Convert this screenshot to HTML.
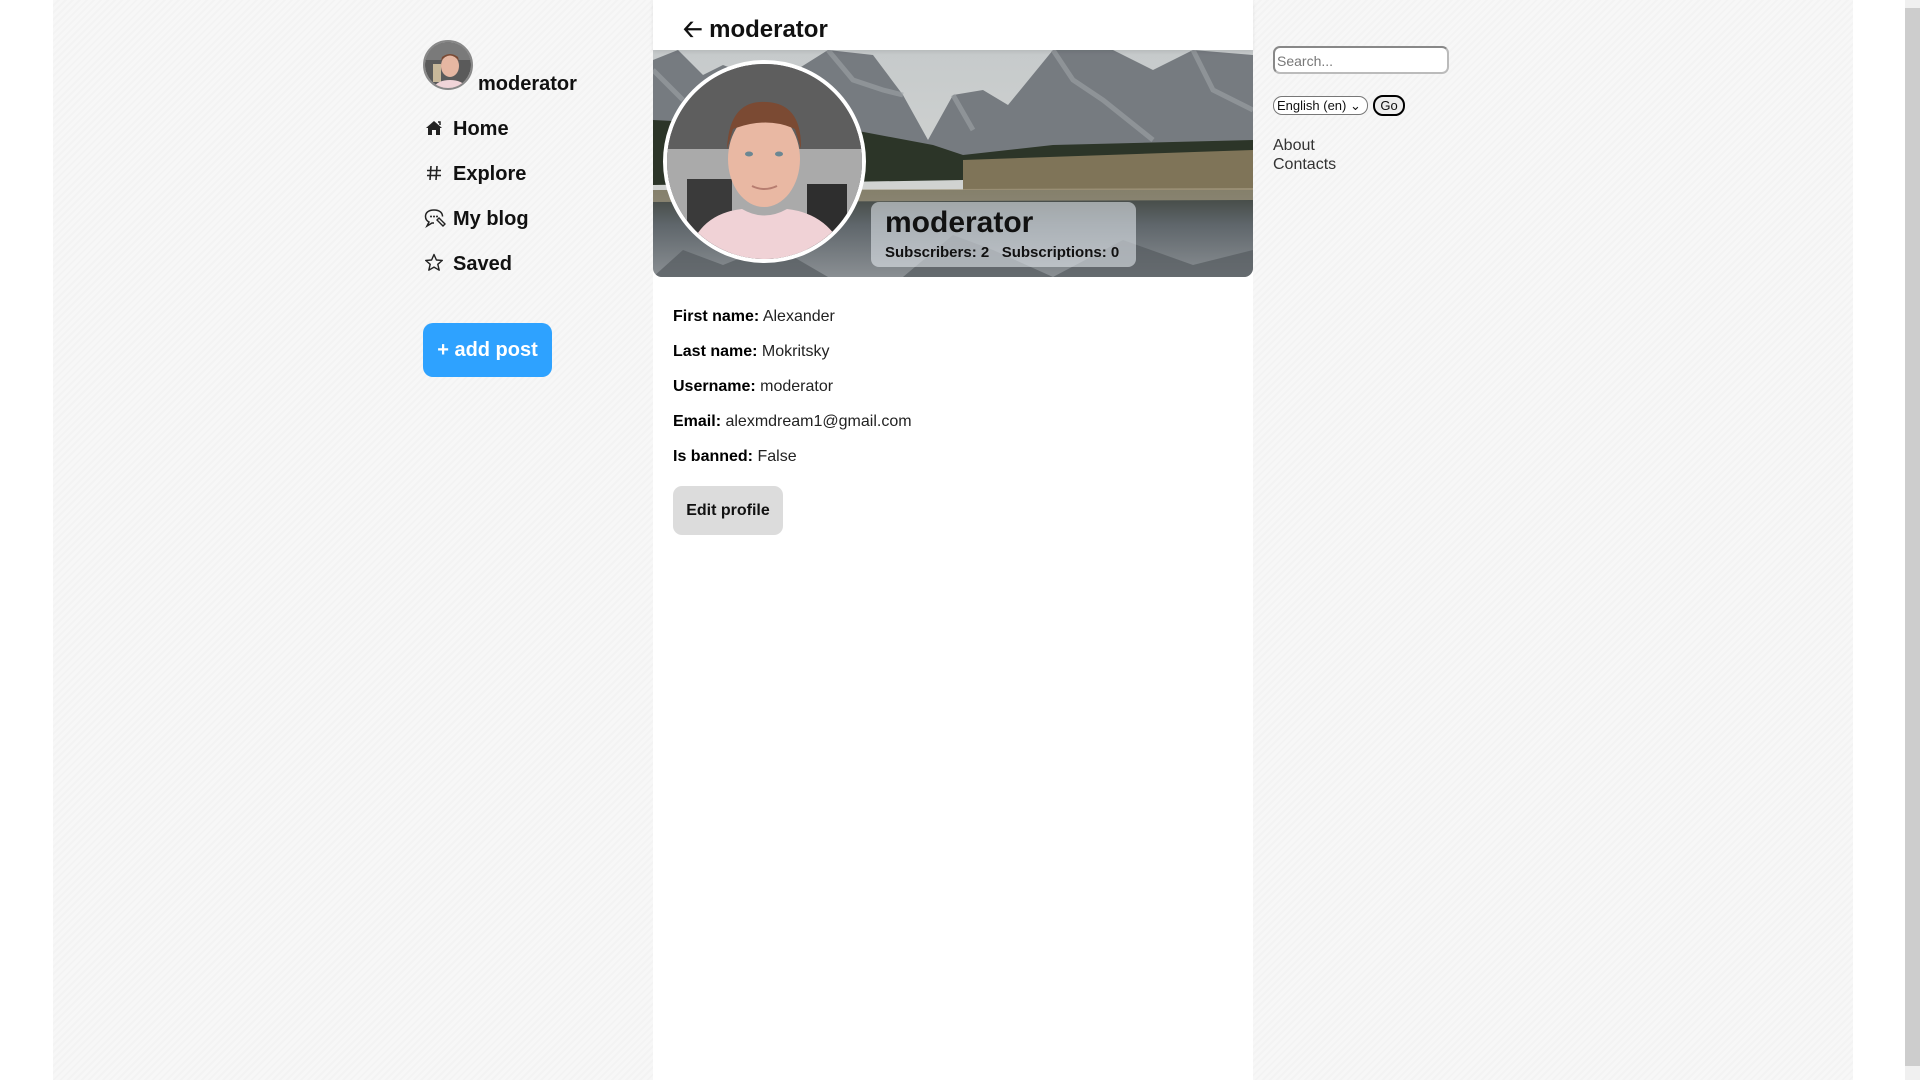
<!DOCTYPE html>
<html><head><meta charset="utf-8">
<style>
*{margin:0;padding:0;box-sizing:border-box}
html,body{width:1920px;height:1080px;overflow:hidden;background:#fff;font-family:"Liberation Sans",sans-serif;color:#111}
.bg{position:absolute;left:53px;top:0;width:1800px;height:1080px;background:repeating-linear-gradient(135deg,#f7f7f7 0 3px,#f3f3f3 3px 5px)}
.center{position:absolute;left:653px;top:0;width:600px;height:1080px;background:#fff}
.sb{position:absolute;left:1905px;top:0;width:15px;height:1080px;background:#f0f0f0}
.sb i{position:absolute;left:0;top:8px;width:15px;height:1058px;background:#cdcdcd}
.hdr{position:absolute;left:653px;top:0;width:600px;height:50px;background:#fff;box-shadow:0 2px 4px rgba(0,0,0,.08);z-index:2}
.hdr span{position:absolute;left:30px;top:12px;font-weight:bold;font-size:24px}
.banner{position:absolute;left:653px;top:50px;width:600px;height:227px;border-radius:0 0 9px 9px;overflow:hidden}
.bigav{position:absolute;left:663px;top:60px;width:203px;height:203px;border-radius:50%;border:4px solid #fff;overflow:hidden;background:#555}
.ov{position:absolute;left:871px;top:202px;width:265px;height:65px;background:rgba(235,240,245,.55);border-radius:8px}
.ov b{position:absolute;left:14px;top:4px;font-size:30px}
.ov p{position:absolute;left:14px;top:42px;font-size:15px;font-weight:bold;white-space:nowrap}
.sav{position:absolute;left:423px;top:40px;width:50px;height:50px;border-radius:50%;border:2px solid #888;overflow:hidden}
.uname{position:absolute;left:478px;top:73px;font-weight:bold;font-size:20px}
.nav{position:absolute;left:424px;font-weight:bold;font-size:20px}
.nav svg{position:absolute;left:0;top:-10px}
.nav span{position:absolute;left:29px;top:-10px;white-space:nowrap}
.add{position:absolute;left:423px;top:323px;width:129px;height:54px;background:#2ea2ff;border-radius:10px;color:#fff;font-weight:bold;font-size:20px;text-align:center;line-height:54px}
.info{position:absolute;left:673px;font-size:16px;color:#222}
.info b{color:#000}
.edit{position:absolute;left:673px;top:486px;width:110px;height:49px;background:#dcdcdc;border-radius:9px;font-weight:bold;font-size:16px;text-align:center;line-height:49px}
.search{position:absolute;left:1273px;top:46px;width:176px;height:28px;border:2px solid #bbb;border-top-color:#888;border-left-color:#888;border-radius:7px;background:#fff;font-size:14px;color:#777;padding:5px 2px}
.sel{position:absolute;left:1273px;top:96px;width:95px;height:19px;border:1px solid #777;border-radius:9px;background:#fff;font-size:13px;padding:1px 3px;color:#111}
.go{position:absolute;left:1373px;top:95px;width:32px;height:21px;border:2px solid #000;border-radius:10px;background:#eee;font-size:13px;text-align:center;line-height:17px}
.lnk{position:absolute;left:1273px;font-size:16px;color:#333}
</style></head><body>
<div class="bg"></div>
<div class="center"></div>
<div class="sb"><i></i></div>

<div class="sav"><svg width="50" height="50" viewBox="0 0 50 50"><rect width="50" height="50" fill="#5a5a5a"/><rect x="0" y="0" width="50" height="18" fill="#7a7a7a"/><rect x="8" y="22" width="8" height="18" fill="#c8b89a"/><ellipse cx="25" cy="24" rx="9" ry="11" fill="#e6b7a2"/><path d="M16 19 Q25 8 34 19 L33 15 Q25 9 17 15Z" fill="#7a4a34"/><path d="M6 50 Q10 38 25 38 Q40 38 44 50Z" fill="#f0d4d8"/></svg></div>
<div class="uname">moderator</div>

<div class="nav" style="top:128px"><svg width="20" height="20" viewBox="0 0 20 20"><path d="M2 10 L10 3 L18 10 L16 10 L16 17 L12 17 L12 12 L8 12 L8 17 L4 17 L4 10Z" fill="#222"/><path d="M14 4 L16 4 L16 7" stroke="#222" stroke-width="1.5" fill="none"/></svg><span>Home</span></div>
<div class="nav" style="top:173px"><svg width="20" height="20" viewBox="0 0 20 20"><path d="M7 3 L6 17 M13 3 L12 17 M3 7.5 H17 M3 12.5 H17" stroke="#222" stroke-width="1.6" fill="none"/></svg><span>Explore</span></div>
<div class="nav" style="top:218px"><svg width="22" height="20" viewBox="0 0 22 20"><path d="M10 2 C4 2 1.5 5 1.5 8.5 C1.5 11 3 13 5 14 L3 18 L8 15 C9 15 10 15 10 15" stroke="#222" stroke-width="1.5" fill="none"/><path d="M10 2 C16 2 18.5 5 18.5 8.5" stroke="#222" stroke-width="1.5" fill="none"/><circle cx="7" cy="8.5" r="1" fill="#222"/><circle cx="10" cy="8.5" r="1" fill="#222"/><circle cx="13" cy="8.5" r="1" fill="#222"/><path d="M13 12 L19 18 L21 16 L15 10Z" stroke="#222" stroke-width="1.4" fill="none"/></svg><span>My blog</span></div>
<div class="nav" style="top:263px"><svg width="20" height="20" viewBox="0 0 20 20"><path d="M10 1.5 L12.4 7 L18.3 7.4 L13.8 11.3 L15.2 17.2 L10 14.1 L4.8 17.2 L6.2 11.3 L1.7 7.4 L7.6 7Z" stroke="#222" stroke-width="1.4" fill="none" stroke-linejoin="round"/></svg><span>Saved</span></div>
<div class="add">+ add post</div>

<div class="hdr"><span>&#129120; moderator</span></div>

<div class="banner"><svg width="600" height="227" viewBox="0 0 600 227">
<defs><linearGradient id="sky" x1="0" y1="0" x2="0" y2="1"><stop offset="0" stop-color="#c6cacb"/><stop offset="1" stop-color="#d8d9d5"/></linearGradient>
<linearGradient id="wat" x1="0" y1="0" x2="0" y2="1"><stop offset="0" stop-color="#3e443c"/><stop offset=".4" stop-color="#5f666b"/><stop offset="1" stop-color="#8a8f93"/></linearGradient></defs>
<rect width="600" height="227" fill="url(#sky)"/>
<path d="M0 10 L25 0 L50 25 L70 15 L110 30 L140 22 L175 0 L220 5 L250 45 L275 90 L300 45 L330 40 L355 55 L400 0 L460 0 L500 20 L540 0 L600 5 L600 110 L0 110Z" fill="#767b80"/>
<path d="M175 0 L200 30 L230 40 L250 45 M400 0 L420 30 L450 50 L500 90 M540 0 L560 40 L600 60 M0 20 L30 50 M300 45 L320 80" stroke="#9ea3a6" stroke-width="5" fill="none" opacity=".6"/>
<path d="M0 70 L200 80 L280 95 L310 105 L400 95 L600 90 L600 120 L310 130 L0 135Z" fill="#2c3528"/>
<path d="M310 110 L600 100 L600 140 L310 145Z" fill="#7f7458"/>
<rect x="0" y="140" width="600" height="87" fill="url(#wat)"/>
<path d="M0 140 L600 138 L600 150 L0 152Z" fill="#a49a80" opacity=".7"/>
<path d="M0 227 L30 200 L70 215 L120 195 L175 227Z M250 227 L300 185 L340 200 L400 227Z M400 227 L470 190 L540 215 L600 200 L600 227Z" fill="#555b60" opacity=".7"/>
</svg></div>

<div class="bigav"><svg width="195" height="195" viewBox="0 0 195 195">
<rect width="195" height="195" fill="#8a8a8a"/><rect width="195" height="85" fill="#5e5e5e"/><rect x="0" y="85" width="195" height="110" fill="#aaa"/>
<rect x="20" y="115" width="45" height="80" fill="#3a3a3a"/><rect x="140" y="120" width="40" height="75" fill="#2e2e2e"/>
<ellipse cx="97" cy="95" rx="36" ry="48" fill="#e9b8a3"/>
<path d="M60 85 Q62 35 100 38 Q135 40 134 85 L128 65 Q100 52 66 65Z" fill="#7b4a33"/>
<ellipse cx="82" cy="90" rx="4" ry="2.5" fill="#6b8793"/><ellipse cx="112" cy="90" rx="4" ry="2.5" fill="#6b8793"/>
<path d="M85 122 Q97 128 110 122" stroke="#b77d70" stroke-width="2" fill="none"/>
<path d="M20 195 Q30 150 75 145 Q97 158 120 145 Q165 150 180 195Z" fill="#f0d2d6"/>
</svg></div>
<div class="ov"><b>moderator</b><p>Subscribers: 2 &nbsp; Subscriptions: 0</p></div>

<div class="info" style="top:308px"><b>First name:</b> Alexander</div>
<div class="info" style="top:343px"><b>Last name:</b> Mokritsky</div>
<div class="info" style="top:378px"><b>Username:</b> moderator</div>
<div class="info" style="top:413px"><b>Email:</b> alexmdream1@gmail.com</div>
<div class="info" style="top:448px"><b>Is banned:</b> False</div>
<div class="edit">Edit profile</div>

<div class="search">Search...</div>
<div class="sel">English (en) &#8964;</div>
<div class="go">Go</div>
<div class="lnk" style="top:137px">About</div>
<div class="lnk" style="top:156px">Contacts</div>
</body></html>
